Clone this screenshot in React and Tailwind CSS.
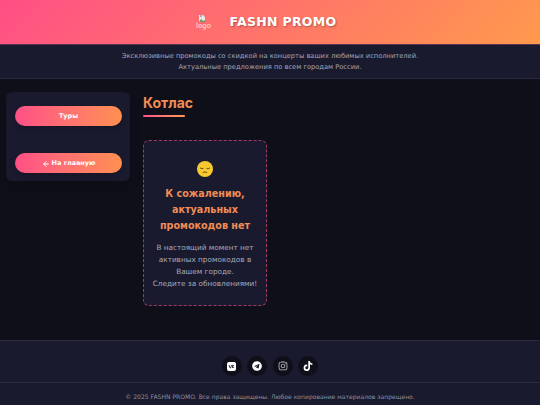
import { ArrowLeft } from "lucide-react";
import { FaTelegram, FaInstagram, FaTiktok } from "react-icons/fa";

const VkIcon = () => (
  <svg width="9" height="9" viewBox="0 0 9 9">
    <rect width="9" height="9" rx="2" fill="#fff" />
    <path d="M2 3l1 3h.6L4.600 3M5.500 2.800v3.200M7 3L5.700 4.400 7 6" stroke="#1a1a2e" strokeWidth="0.8" fill="none" />
  </svg>
);

const TelegramIcon = () => <FaTelegram size={10} className="text-white" />;
const InstagramIcon = () => <FaInstagram size={10} className="text-[#c4c4cc]" />;
const TiktokIcon = () => <FaTiktok size={10} className="text-white" />;

const socials = [VkIcon, TelegramIcon, InstagramIcon, TiktokIcon];

const SadFace = () => (
  <svg width="16" height="16" viewBox="0 0 16 16">
    <circle cx="8" cy="8" r="8" fill="#f5c92f" />
    <path d="M3 6.800 Q5 8.600 6.600 7.200 M9.400 7.200 Q11 8.600 13 6.800" stroke="#5b4513" strokeWidth="0.9" fill="none" />
    <path d="M5.800 11.600 Q8 10.200 10.200 11.600" stroke="#5b4513" strokeWidth="0.9" fill="none" />
  </svg>
);

const BrokenImage = () => (
  <svg width="8" height="9" viewBox="0 0 8 9" className="-mb-px -ml-1">
    <path d="M1 1h4l2 2v5H1z" fill="#e8e6dc" />
    <path d="M1 8l2-3 2 2 2-1v2z" fill="#6c9a62" />
    <path d="M2 1h2v2H2z" fill="#8fb4e8" />
  </svg>
);

const GradButton = ({ children }) => (
  <button className="flex h-5 w-full items-center justify-center gap-0.5 rounded-full bg-gradient-to-r from-[#ff4f86] to-[#ff8f50] pt-px text-[6.5px] font-bold text-white shadow-md">
    {children}
  </button>
);

export default function App() {
  return (
    <div className="flex h-[405px] flex-col overflow-hidden bg-[#0f0f1a] font-['DejaVu_Sans',sans-serif] text-white">
      {/* Header */}
      <header className="flex h-[45px] shrink-0 items-center justify-center gap-[18px] border-b border-[#5a3550] bg-[linear-gradient(135deg,#ff4f86,#ff9a4d)] pr-[8px]">
        <div className="flex w-[16px] flex-col items-center text-[7px] leading-[9px] text-[#ffe3e0]">
          <BrokenImage />
          <span>logo</span>
        </div>
        <h1 className="text-[12.5px] font-bold tracking-[0.025em] [text-shadow:1px_1px_2px_rgba(0,0,0,0.3)]">
          FASHN PROMO
        </h1>
      </header>

      {/* Subtitle */}
      <div className="flex h-[34px] shrink-0 flex-col items-center justify-center border-b border-[#2a2a40] bg-[#1a1a2e] text-[6.7px] leading-[11px] text-[#a3a3b0]">
        <p>Эксклюзивные промокоды со скидкой на концерты ваших любимых исполнителей.</p>
        <p>Актуальные предложения по всем городам России.</p>
      </div>

      {/* Main */}
      <main className="flex flex-1 items-start gap-[13px] pl-[6px] pt-[13px]">
        <aside className="flex h-[89px] w-[124px] flex-col justify-between rounded-md bg-[#1a1a2e] pb-2 pl-[9px] pr-[8px] pt-[14px] shadow-lg">
          <GradButton>Туры</GradButton>
          <GradButton>
            <ArrowLeft size={8} strokeWidth={3} />
            На главную
          </GradButton>
        </aside>

        <section className="w-[124px]">
          <h2 className="pt-px font-['Inter',sans-serif] text-[14px] font-bold leading-[20px] text-[#f08c54]">Котлас</h2>
          <div className="mt-[2px] h-0.5 w-[42px] rounded bg-gradient-to-r from-[#ff4f86] to-[#ff9a4d]" />
          <div className="mt-[23px] flex h-[166px] flex-col items-center rounded-md border border-dashed border-[#ff4f86]/60 bg-[#1a1a2e] pt-[20px] text-center">
            <SadFace />
            <h3 className="mt-[9px] text-[9.6px] font-bold leading-[16px] text-[#f08c54]">
              К сожалению,
              <br />
              актуальных
              <br />
              промокодов нет
            </h3>
            <p className="mt-[8px] text-[7.3px] leading-[12px] text-[#a9a9b6]">
              В настоящий момент нет
              <br />
              активных промокодов в
              <br />
              Вашем городе.
              <br />
              Следите за обновлениями!
            </p>
          </div>
        </section>
      </main>

      {/* Footer */}
      <footer className="h-[65px] shrink-0 border-t border-[#2a2a40] bg-[#1a1a2e]">
        <div className="flex h-[42px] items-end justify-center gap-[5.5px] border-b border-[#2a2a40] pb-[6px]">
          {socials.map((Icon, i) => (
            <span key={i} className="flex h-5 w-5 items-center justify-center rounded-full bg-[#0f0f1a]">
              <Icon />
            </span>
          ))}
        </div>
        <p className="pt-[9px] text-center text-[6.05px] leading-[9px] text-[#8d8d9b]">
          © 2025 FASHN PROMO. Все права защищены. Любое копирование материалов запрещено.
        </p>
      </footer>
    </div>
  );
}
